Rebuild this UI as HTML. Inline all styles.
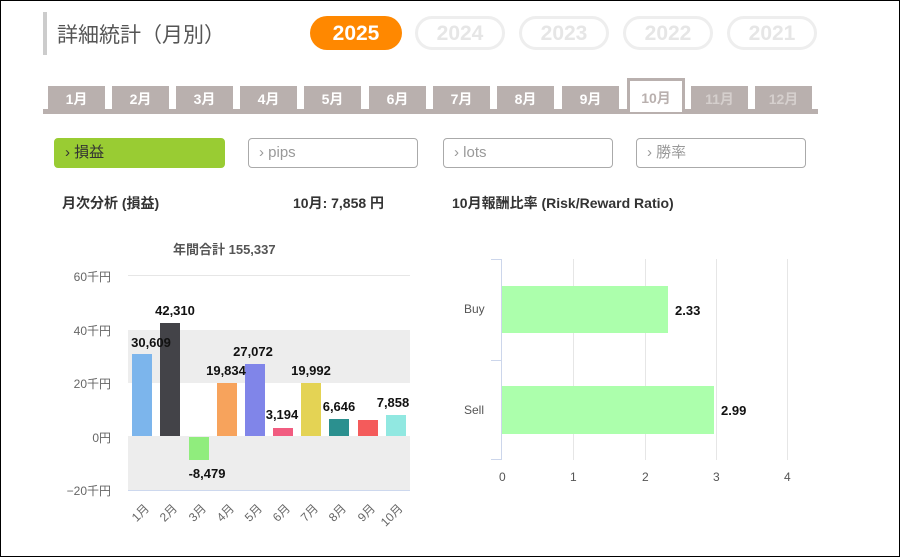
<!DOCTYPE html>
<html><head><meta charset="utf-8"><style>
body{margin:0;width:900px;height:557px;overflow:hidden;font-family:"Liberation Sans","Noto Sans CJK JP",sans-serif;}
.frame{position:absolute;left:0;top:0;width:900px;height:557px;background:#fff}
.bd{position:absolute;left:0;top:0;width:898px;height:555px;border:1px solid #000}
.a{position:absolute}
.pill{position:absolute;top:16px;height:28px;border:3px solid #eee;border-radius:17px;color:#e6e6e6;font-weight:bold;font-size:21px;text-align:center;line-height:29px;width:84px}
.tab{position:absolute;top:86px;width:57px;height:23px;background:#b9b0ae;color:#fff;font-weight:bold;font-size:14px;text-align:center;line-height:26px}
.btn{position:absolute;top:138px;border:1px solid #aaa;border-radius:4px;width:169px;color:#999;font-size:15px;line-height:28px;box-sizing:border-box;height:30px;padding-left:10px}
.yl{position:absolute;font-size:12px;color:#666;text-align:right;width:60px;left:51px}
.bar{position:absolute;width:20px}
.v{position:absolute;font-size:13px;font-weight:bold;color:#111;text-align:center;width:60px}
.xl{position:absolute;font-size:12px;color:#666;transform:rotate(-45deg);transform-origin:right top}
</style></head><body><div class="frame">
<div class="bd"></div>
<div class="a" style="left:43px;top:12px;width:4px;height:43px;background:#ccc"></div>
<div class="a" style="left:57px;top:19px;font-size:21px;color:#555">詳細統計（月別）</div>
<div class="a" style="left:310px;top:16px;width:92px;height:34px;background:#f80;border-radius:17px;color:#fff;font-weight:bold;font-size:21px;text-align:center;line-height:36px">2025</div>
<div class="pill" style="left:415px">2024</div>
<div class="pill" style="left:519px">2023</div>
<div class="pill" style="left:623px">2022</div>
<div class="pill" style="left:727px">2021</div>
<div class="a" style="left:43px;top:109px;width:775px;height:5px;background:#b9b0ae"></div>
<div class="tab" style="left:48px">1月</div><div class="tab" style="left:112px">2月</div><div class="tab" style="left:176px">3月</div><div class="tab" style="left:240px">4月</div><div class="tab" style="left:304px">5月</div><div class="tab" style="left:369px">6月</div><div class="tab" style="left:433px">7月</div><div class="tab" style="left:497px">8月</div><div class="tab" style="left:562px">9月</div>
<div class="a" style="left:627px;top:78px;width:52px;height:31px;border:3px solid #b9b0ae;border-bottom:none;background:#fff;color:#b9b0ae;font-weight:bold;font-size:14px;text-align:center;line-height:34px">10月</div>
<div class="tab" style="left:691px;color:#d5cfcd">11月</div><div class="tab" style="left:755px;color:#d5cfcd">12月</div>
<div class="btn" style="left:54px;width:171px;background:#9c3;border-color:#9c3;color:#333">› 損益</div>
<div class="btn" style="left:248px;width:170px">› pips</div>
<div class="btn" style="left:443px;width:170px">› lots</div>
<div class="btn" style="left:636px;width:170px">› 勝率</div>
<div class="a" style="left:62px;top:193px;font-size:14px;font-weight:bold;color:#333">月次分析 (損益)</div>
<div class="a" style="left:293px;top:193px;font-size:14px;font-weight:bold;color:#333">10月:  7,858 円</div>
<div class="a" style="left:452px;top:193px;font-size:14px;font-weight:bold;color:#333">10月報酬比率 (Risk/Reward Ratio)</div>
<div class="a" style="left:173px;top:239px;font-size:13px;font-weight:bold;color:#555">年間合計 155,337</div>
<div class="a" style="left:128px;top:275px;width:282px;height:1px;background:#e6e6e6"></div>
<div class="a" style="left:128px;top:330px;width:282px;height:53px;background:#ededed"></div>
<div class="a" style="left:128px;top:436px;width:282px;height:54px;background:#ededed"></div>
<div class="a" style="left:128px;top:490px;width:282px;height:1px;background:#cdd8ee"></div>
<div class="yl" style="top:268px">60千円</div><div class="yl" style="top:322px">40千円</div><div class="yl" style="top:375px">20千円</div><div class="yl" style="top:429px">0円</div><div class="yl" style="top:482px">−20千円</div>
<div class="bar" style="left:132px;top:354px;height:82px;background:#7cb5ec"></div>
<div class="bar" style="left:160px;top:323px;height:113px;background:#434348"></div>
<div class="bar" style="left:189px;top:437px;height:23px;background:#90ed7d"></div>
<div class="bar" style="left:217px;top:383px;height:53px;background:#f7a35c"></div>
<div class="bar" style="left:245px;top:364px;height:72px;background:#8085e9"></div>
<div class="bar" style="left:273px;top:428px;height:8px;background:#f15c80"></div>
<div class="bar" style="left:301px;top:383px;height:53px;background:#e4d354"></div>
<div class="bar" style="left:329px;top:419px;height:17px;background:#2b908f"></div>
<div class="bar" style="left:358px;top:420px;height:16px;background:#f45b5b"></div>
<div class="bar" style="left:386px;top:415px;height:21px;background:#91e8e1"></div>
<div class="v" style="left:121px;top:335px">30,609</div>
<div class="v" style="left:145px;top:303px">42,310</div>
<div class="v" style="left:177px;top:466px">-8,479</div>
<div class="v" style="left:196px;top:363px">19,834</div>
<div class="v" style="left:223px;top:344px">27,072</div>
<div class="v" style="left:252px;top:407px">3,194</div>
<div class="v" style="left:281px;top:363px">19,992</div>
<div class="v" style="left:309px;top:399px">6,646</div>
<div class="v" style="left:363px;top:395px">7,858</div>
<div class="xl" style="left:122px;top:500px">1月</div><div class="xl" style="left:150px;top:500px">2月</div><div class="xl" style="left:179px;top:500px">3月</div><div class="xl" style="left:207px;top:500px">4月</div><div class="xl" style="left:235px;top:500px">5月</div><div class="xl" style="left:263px;top:500px">6月</div><div class="xl" style="left:291px;top:500px">7月</div><div class="xl" style="left:319px;top:500px">8月</div><div class="xl" style="left:348px;top:500px">9月</div><div class="xl" style="left:369px;top:500px">10月</div>
<div class="a" style="left:573px;top:259px;width:1px;height:201px;background:#e6e6e6"></div>
<div class="a" style="left:645px;top:259px;width:1px;height:201px;background:#e6e6e6"></div>
<div class="a" style="left:716px;top:259px;width:1px;height:201px;background:#e6e6e6"></div>
<div class="a" style="left:787px;top:259px;width:1px;height:201px;background:#e6e6e6"></div>
<div class="a" style="left:501px;top:259px;width:1px;height:201px;background:#ccd6eb"></div>
<div class="a" style="left:491px;top:259px;width:10px;height:1px;background:#ccd6eb"></div>
<div class="a" style="left:491px;top:360px;width:10px;height:1px;background:#ccd6eb"></div>
<div class="a" style="left:491px;top:459px;width:10px;height:1px;background:#ccd6eb"></div>
<div class="a" style="left:502px;top:286px;width:166px;height:47px;background:#acffac"></div>
<div class="a" style="left:502px;top:386px;width:212px;height:48px;background:#acffac"></div>
<div class="a" style="left:464px;top:302px;font-size:12px;color:#555">Buy</div>
<div class="a" style="left:464px;top:403px;font-size:12px;color:#555">Sell</div>
<div class="a" style="left:675px;top:303px;font-size:13px;font-weight:bold;color:#111">2.33</div>
<div class="a" style="left:721px;top:403px;font-size:13px;font-weight:bold;color:#111">2.99</div>
<div class="a" style="left:499px;top:470px;font-size:12px;color:#555">0</div>
<div class="a" style="left:570px;top:470px;font-size:12px;color:#555">1</div>
<div class="a" style="left:642px;top:470px;font-size:12px;color:#555">2</div>
<div class="a" style="left:713px;top:470px;font-size:12px;color:#555">3</div>
<div class="a" style="left:784px;top:470px;font-size:12px;color:#555">4</div>
</div></body></html>
